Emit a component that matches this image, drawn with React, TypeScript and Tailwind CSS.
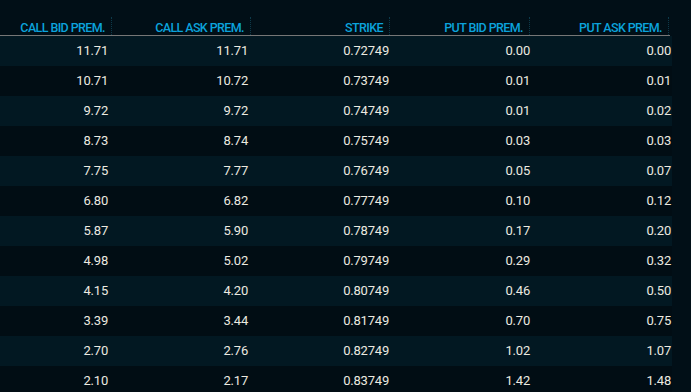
import React from 'react';

const rows = [
  ['11.71', '11.71', '0.72749', '0.00', '0.00'],
  ['10.71', '10.72', '0.73749', '0.01', '0.01'],
  ['9.72', '9.72', '0.74749', '0.01', '0.02'],
  ['8.73', '8.74', '0.75749', '0.03', '0.03'],
  ['7.75', '7.77', '0.76749', '0.05', '0.07'],
  ['6.80', '6.82', '0.77749', '0.10', '0.12'],
  ['5.87', '5.90', '0.78749', '0.17', '0.20'],
  ['4.98', '5.02', '0.79749', '0.29', '0.32'],
  ['4.15', '4.20', '0.80749', '0.46', '0.50'],
  ['3.39', '3.44', '0.81749', '0.70', '0.75'],
  ['2.70', '2.76', '0.82749', '1.02', '1.07'],
  ['2.10', '2.17', '0.83749', '1.42', '1.48'],
];

const headers = ['CALL BID PREM.', 'CALL ASK PREM.', 'STRIKE', 'PUT BID PREM.', 'PUT ASK PREM.'];

const App = () => {
  return (
    <div
      className="w-[691px] h-[392px] overflow-hidden bg-[#010f17] text-[13px]"
      style={{ fontFamily: "Roboto, 'Liberation Sans', sans-serif" }}
    >
      {/* header */}
      <div className="grid grid-cols-[112px_139px_139px_140px_139px] w-[670px] h-[36px] border-b border-[#767676] pt-[17px]">
        {headers.map(h => (
          <div
            key={h}
            className="h-[18px] flex items-center justify-end pr-[6px] pt-[4px] border-r border-dotted border-[#0d3a4a] text-[#0ba3dc] text-[12.5px] font-medium tracking-[-0.6px] leading-none"
          >
            {h}
          </div>
        ))}
      </div>

      {/* body */}
      <div className="w-[672px]">
        {rows.map((r, i) => (
          <div
            key={r[2]}
            className={`grid grid-cols-[108px_140px_141px_141px_141px] h-[30px] items-center text-[#eceae0] tracking-[-0.2px] ${
              i % 2 === 0 ? 'bg-[#021822]' : 'bg-[#010d14]'
            }`}
          >
            {r.map((v, j) => (
              <div key={j} className="text-right">
                {v}
              </div>
            ))}
          </div>
        ))}
      </div>
    </div>
  );
};

export default App;
